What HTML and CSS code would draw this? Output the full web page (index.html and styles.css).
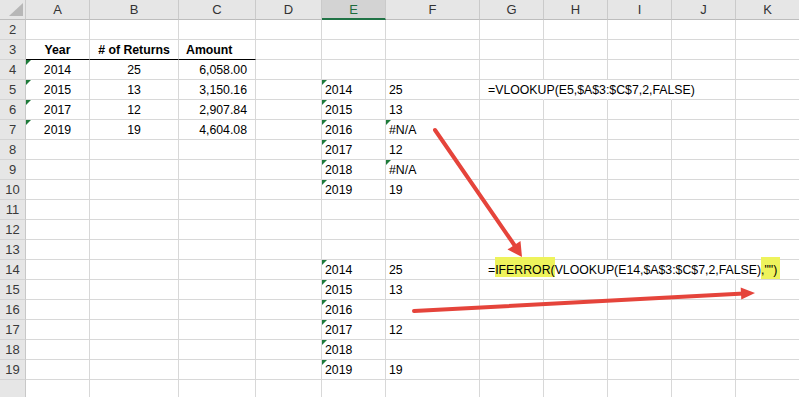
FILE: index.html
```html
<!DOCTYPE html>
<html>
<head>
<meta charset="utf-8">
<title>VLOOKUP IFERROR</title>
<link rel="stylesheet" href="styles.css">
</head>
<body>
<div class="sheet">
  <div class="row hdr">
    <div class="corner"><svg width="14" height="13" viewBox="0 0 14 13"><polygon points="14,0 14,13 0,13" fill="#b7b7b7"/></svg></div>
    <div class="ch">A</div><div class="ch">B</div><div class="ch">C</div><div class="ch">D</div><div class="ch sel">E</div><div class="ch">F</div><div class="ch">G</div><div class="ch">H</div><div class="ch">I</div><div class="ch">J</div><div class="ch">K</div>
  </div>
  <div class="row"><div class="rh">2</div><div class="c"></div><div class="c"></div><div class="c"></div><div class="c"></div><div class="c"></div><div class="c"></div><div class="c"></div><div class="c"></div><div class="c"></div><div class="c"></div><div class="c"></div></div>
  <div class="row"><div class="rh">3</div><div class="c ctr b ul">Year</div><div class="c ctr b ul"># of Returns</div><div class="c b ul amt">Amount</div><div class="c"></div><div class="c"></div><div class="c"></div><div class="c"></div><div class="c"></div><div class="c"></div><div class="c"></div><div class="c"></div></div>
  <div class="row"><div class="rh">4</div><div class="c ctr tri">2014</div><div class="c ctr">25</div><div class="c num">6,058.00</div><div class="c"></div><div class="c"></div><div class="c"></div><div class="c"></div><div class="c"></div><div class="c"></div><div class="c"></div><div class="c"></div></div>
  <div class="row"><div class="rh">5</div><div class="c ctr tri">2015</div><div class="c ctr">13</div><div class="c num">3,150.16</div><div class="c"></div><div class="c tri">2014</div><div class="c">25</div><div class="c g ov">=VLOOKUP(E5,$A$3:$C$7,2,FALSE)</div><div class="c ov"></div><div class="c ov"></div><div class="c"></div><div class="c"></div></div>
  <div class="row"><div class="rh">6</div><div class="c ctr tri">2017</div><div class="c ctr">12</div><div class="c num">2,907.84</div><div class="c"></div><div class="c tri">2015</div><div class="c">13</div><div class="c"></div><div class="c"></div><div class="c"></div><div class="c"></div><div class="c"></div></div>
  <div class="row"><div class="rh">7</div><div class="c ctr tri">2019</div><div class="c ctr">19</div><div class="c num">4,604.08</div><div class="c"></div><div class="c tri">2016</div><div class="c tri">#N/A</div><div class="c"></div><div class="c"></div><div class="c"></div><div class="c"></div><div class="c"></div></div>
  <div class="row"><div class="rh">8</div><div class="c"></div><div class="c"></div><div class="c"></div><div class="c"></div><div class="c tri">2017</div><div class="c">12</div><div class="c"></div><div class="c"></div><div class="c"></div><div class="c"></div><div class="c"></div></div>
  <div class="row"><div class="rh">9</div><div class="c"></div><div class="c"></div><div class="c"></div><div class="c"></div><div class="c tri">2018</div><div class="c tri">#N/A</div><div class="c"></div><div class="c"></div><div class="c"></div><div class="c"></div><div class="c"></div></div>
  <div class="row"><div class="rh">10</div><div class="c"></div><div class="c"></div><div class="c"></div><div class="c"></div><div class="c tri">2019</div><div class="c">19</div><div class="c"></div><div class="c"></div><div class="c"></div><div class="c"></div><div class="c"></div></div>
  <div class="row"><div class="rh">11</div><div class="c"></div><div class="c"></div><div class="c"></div><div class="c"></div><div class="c"></div><div class="c"></div><div class="c"></div><div class="c"></div><div class="c"></div><div class="c"></div><div class="c"></div></div>
  <div class="row"><div class="rh">12</div><div class="c"></div><div class="c"></div><div class="c"></div><div class="c"></div><div class="c"></div><div class="c"></div><div class="c"></div><div class="c"></div><div class="c"></div><div class="c"></div><div class="c"></div></div>
  <div class="row"><div class="rh">13</div><div class="c"></div><div class="c"></div><div class="c"></div><div class="c"></div><div class="c"></div><div class="c"></div><div class="c"></div><div class="c"></div><div class="c"></div><div class="c"></div><div class="c"></div></div>
  <div class="row"><div class="rh">14</div><div class="c"></div><div class="c"></div><div class="c"></div><div class="c"></div><div class="c tri">2014</div><div class="c">25</div><div class="c g ov">=<span class="hl hl1">IFERROR(</span>VLOOKUP(E14,$A$3:$C$7,2,FALSE)<span class="hl hl2">,"")</span></div><div class="c ov"></div><div class="c ov"></div><div class="c ov"></div><div class="c"></div></div>
  <div class="row"><div class="rh">15</div><div class="c"></div><div class="c"></div><div class="c"></div><div class="c"></div><div class="c tri">2015</div><div class="c">13</div><div class="c"></div><div class="c"></div><div class="c"></div><div class="c"></div><div class="c"></div></div>
  <div class="row"><div class="rh">16</div><div class="c"></div><div class="c"></div><div class="c"></div><div class="c"></div><div class="c tri">2016</div><div class="c"></div><div class="c"></div><div class="c"></div><div class="c"></div><div class="c"></div><div class="c"></div></div>
  <div class="row"><div class="rh">17</div><div class="c"></div><div class="c"></div><div class="c"></div><div class="c"></div><div class="c tri">2017</div><div class="c">12</div><div class="c"></div><div class="c"></div><div class="c"></div><div class="c"></div><div class="c"></div></div>
  <div class="row"><div class="rh">18</div><div class="c"></div><div class="c"></div><div class="c"></div><div class="c"></div><div class="c tri">2018</div><div class="c"></div><div class="c"></div><div class="c"></div><div class="c"></div><div class="c"></div><div class="c"></div></div>
  <div class="row"><div class="rh">19</div><div class="c"></div><div class="c"></div><div class="c"></div><div class="c"></div><div class="c tri">2019</div><div class="c">19</div><div class="c"></div><div class="c"></div><div class="c"></div><div class="c"></div><div class="c"></div></div>
  <div class="row"><div class="rh"></div><div class="c"></div><div class="c"></div><div class="c"></div><div class="c"></div><div class="c"></div><div class="c"></div><div class="c"></div><div class="c"></div><div class="c"></div><div class="c"></div><div class="c"></div></div>
</div>
<svg class="arrows" width="799" height="397" viewBox="0 0 799 397">
  <line x1="435" y1="130" x2="515" y2="246" stroke="#e5443b" stroke-width="4" stroke-linecap="round"/>
  <polygon points="522,257 507.5,249.5 520.5,241" fill="#e5443b"/>
  <line x1="414" y1="311" x2="744" y2="293.5" stroke="#e5443b" stroke-width="4" stroke-linecap="round"/>
  <polygon points="755,293 741.3,299.5 740.7,287.5" fill="#e5443b"/>
</svg>
</body>
</html>
```
FILE: styles.css
```css
* { box-sizing: border-box; }
html, body { margin: 0; padding: 0; }
body {
  width: 799px;
  height: 397px;
  overflow: hidden;
  position: relative;
  background: #fff;
  font-family: "Liberation Sans", Arial, sans-serif;
  font-size: 12.3px;
  color: #000;
}
.sheet { display: flex; flex-direction: column; }
.row {
  display: grid;
  grid-template-columns: 26px 64px 89px 77px 66px 64px 94px 64px 64px 64px 64px 64px;
  height: 20px;
}
.hdr .ch, .hdr .corner {
  background: #e6e6e6;
  border-right: 1px solid #cacaca;
  border-bottom: 1px solid #bdbdbd;
  height: 20px;
  line-height: 19px;
  text-align: center;
  color: #333;
  font-size: 13px;
}
.hdr .corner {
  display: flex;
  align-items: flex-end;
  justify-content: flex-end;
  padding: 0 2px 3px 0;
}
.hdr .corner svg { display: block; }
.hdr .sel {
  background: #d3d3d3;
  color: #1e6b3c;
  border-bottom: 2px solid #217346;
}
.rh {
  background: #e6e6e6;
  border-right: 1px solid #c8c8c8;
  border-bottom: 1px solid #d4d4d4;
  height: 20px;
  line-height: 20px;
  text-align: center;
  color: #3a3a3a;
  font-size: 13px;
}
.c {
  position: relative;
  border-right: 1px solid #d8d8d8;
  border-bottom: 1px solid #d8d8d8;
  height: 20px;
  line-height: 20px;
  padding: 0 3px;
  white-space: nowrap;
}
.ctr { text-align: center; }
.num { text-align: right; padding-right: 8px; }
.amt { padding-left: 7px; }
.b { font-weight: bold; }
.ul { border-bottom-color: #000; }
.g { padding-left: 8px; }
.ov { border-right-color: transparent; }
.tri::before {
  content: "";
  position: absolute;
  left: 0;
  top: 0;
  border-top: 5px solid #1e7b3a;
  border-right: 5px solid transparent;
}
.hl { background: #eef35c; }
.hl1 { padding: 6px 0 0 0; }
.hl2 { padding: 6px 3px 2px 0; }
.arrows {
  position: absolute;
  left: 0;
  top: 0;
  pointer-events: none;
}
```
